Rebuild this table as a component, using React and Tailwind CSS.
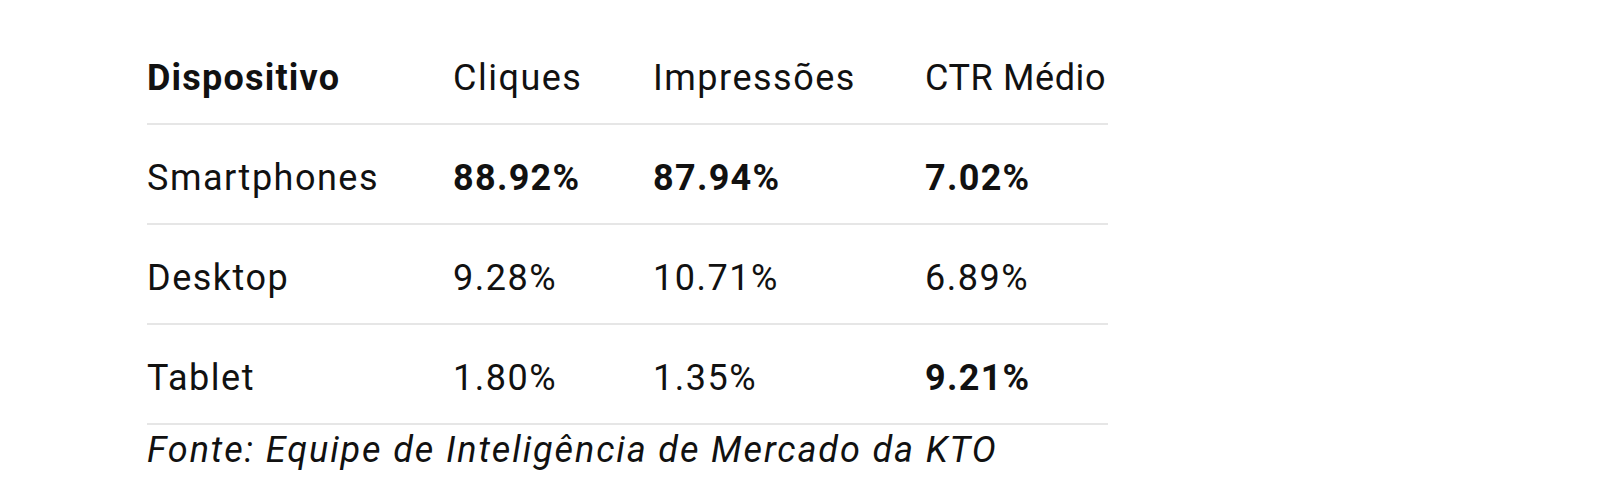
import React from "react";

const rows = [
  ["Smartphones", "88.92%", "87.94%", "7.02%", [true, true, true]],
  ["Desktop", "9.28%", "10.71%", "6.89%", [false, false, false]],
  ["Tablet", "1.80%", "1.35%", "9.21%", [false, false, true]],
];

export default function App() {
  return (
    <div className="w-[1600px] h-[503px] bg-white text-[#111111] font-['Roboto',sans-serif] pl-[147px] pt-[25px]">
      <div className="w-[961px]">
        <div className="grid grid-cols-[306px_200px_272px_183px] h-[100px] items-center pt-[7px] border-b-2 border-[#e6e6e6] text-[36px] tracking-[1.5px] leading-none whitespace-nowrap">
          <div className="font-bold tracking-[1.2px]">Dispositivo</div>
          <div className="font-normal">Cliques</div>
          <div className="font-normal">Impressões</div>
          <div className="font-normal tracking-[0.6px]">CTR Médio</div>
        </div>
        {rows.map((r) => (
          <div
            key={r[0]}
            className="grid grid-cols-[306px_200px_272px_183px] h-[100px] items-center pt-[7px] border-b-2 border-[#e6e6e6] text-[36px] tracking-[1.5px] leading-none whitespace-nowrap"
          >
            <div>{r[0]}</div>
            <div className={r[4][0] ? "font-bold tracking-[1.3px]" : "font-normal"}>{r[1]}</div>
            <div className={r[4][1] ? "font-bold tracking-[1.3px]" : "font-normal"}>{r[2]}</div>
            <div className={r[4][2] ? "font-bold tracking-[1.3px]" : "font-normal"}>{r[3]}</div>
          </div>
        ))}
        <div className="italic text-[36px] tracking-[1.9px] leading-[48px] pt-[1px] whitespace-nowrap">
          Fonte: Equipe de Inteligência de Mercado da KTO
        </div>
      </div>
    </div>
  );
}
